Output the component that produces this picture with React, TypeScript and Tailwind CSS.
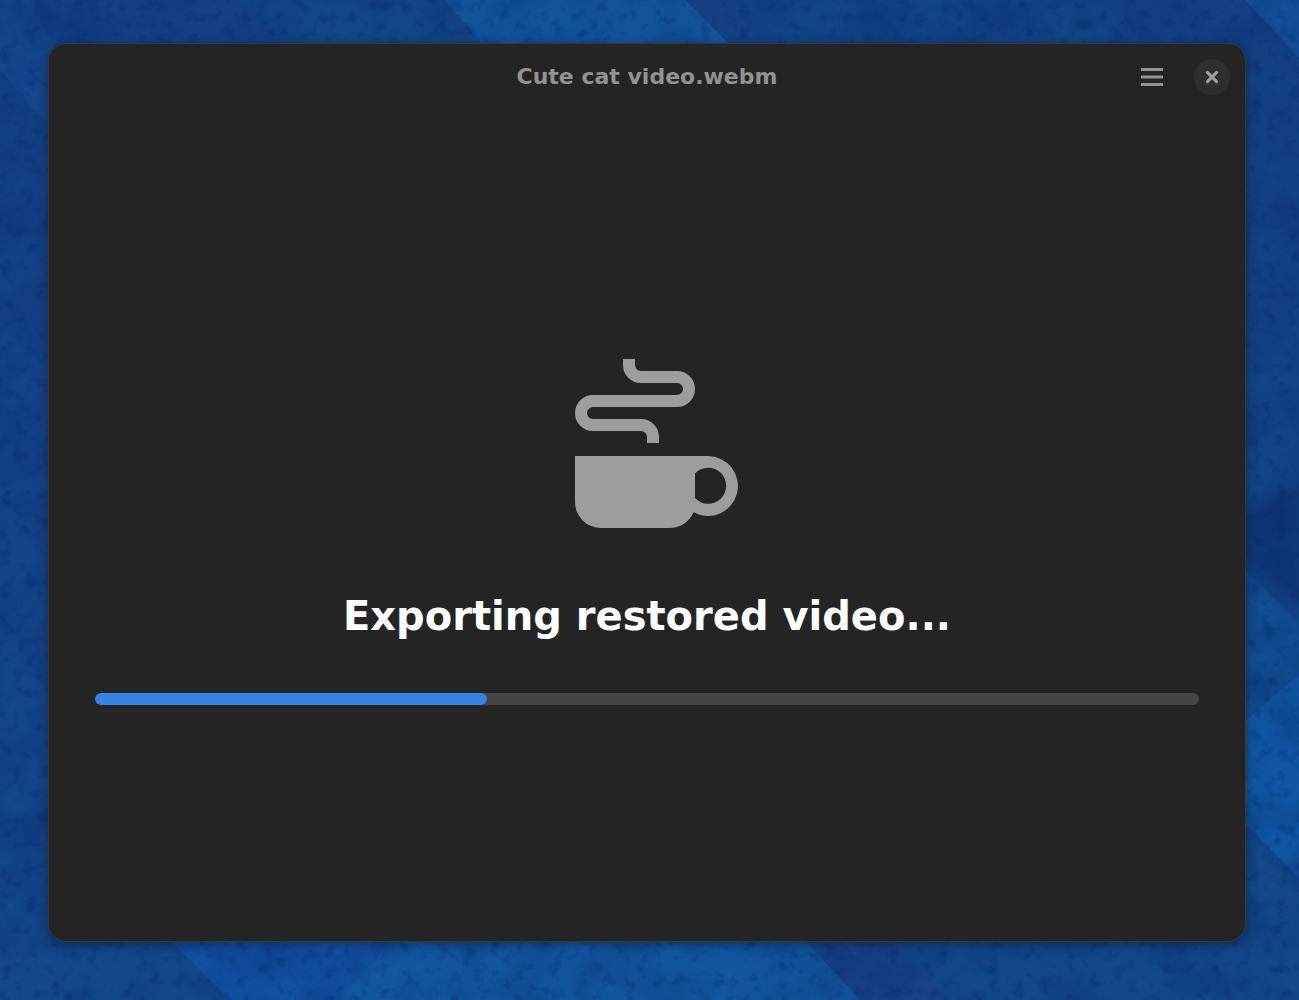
function Wallpaper() {
  return (
    <svg
      aria-hidden="true"
      className="absolute inset-0 -z-10 h-full w-full"
      viewBox="0 0 1299 1000"
      preserveAspectRatio="none"
    >
      <defs>
        <filter id="mottle" x="0" y="0" width="100%" height="100%" colorInterpolationFilters="sRGB">
          <feTurbulence type="fractalNoise" baseFrequency="0.02" numOctaves="3" seed="8" />
          <feColorMatrix values="0 0 0 0 0.03  0 0 0 0 0.17  0 0 0 0 0.43  2.4 0 0 0 -0.95" />
        </filter>
        <filter id="speckle" x="0" y="0" width="100%" height="100%" colorInterpolationFilters="sRGB">
          <feTurbulence type="fractalNoise" baseFrequency="0.08" numOctaves="4" seed="21" />
          <feColorMatrix values="0 0 0 0 0.02  0 0 0 0 0.14  0 0 0 0 0.42  3.4 0 0 0 -1.8" />
        </filter>
        <linearGradient id="base" x1="0" y1="0" x2="0" y2="1">
          <stop offset="0" stopColor="#134182" />
          <stop offset="1" stopColor="#12488a" />
        </linearGradient>
      </defs>
      <rect width="1299" height="1000" fill="url(#base)" />
      <path d="M0 0H30L60 60V140L0 70Z" fill="#15478c" />
      <path d="M240 0H445L490 50H290Z" fill="#124684" />
      <path d="M445 0H685L735 50H487Z" fill="#12549a" />
      <path d="M740 0H1100L1150 50H790Z" fill="#124584" />
      <path d="M1245 0H1299V58Z" fill="#15509b" />
      <path d="M1240 565L1299 622V690L1240 720Z" fill="#124c91" />
      <path d="M1240 725L1299 675V878L1240 818Z" fill="#1156a2" />
      <path d="M160 930H795L860 1000H230Z" fill="#1250a0" />
      <path d="M400 930H795L860 1000H340Z" fill="#12569f" />
      <path d="M800 930H880L950 1000H860Z" fill="#174388" />
      <rect width="1299" height="1000" filter="url(#mottle)" opacity="0.35" />
      <rect width="1299" height="1000" filter="url(#speckle)" opacity="0.3" />
      <g filter="blur(6px)" fill="#0a2260">
        <path d="M1240 515L1310 480V615L1240 560Z" opacity="0.4" />
      </g>
      <ellipse cx="1083" cy="24" rx="10" ry="4" fill="#0a2260" filter="blur(3px)" opacity="0.6" />
    </svg>
  );
}

function MenuIcon() {
  return (
    <svg aria-hidden="true" className="h-6 w-6" viewBox="0 0 24 24" fill="none" stroke="#929292" strokeWidth="3">
      <path d="M1 4.5h22M1 12h22M1 19.5h22" />
    </svg>
  );
}

function CloseIcon() {
  return (
    <svg aria-hidden="true" className="h-6 w-6" viewBox="0 0 24 24" fill="none" stroke="#a0a0a0" strokeWidth="3" strokeLinecap="round">
      <path d="M7.4 7.4l9.2 9.2M16.6 7.4l-9.2 9.2" />
    </svg>
  );
}

function CoffeeIcon() {
  return (
    <svg aria-hidden="true" className="h-48 w-48" viewBox="0 0 192 192">
      <path
        d="M78 12v6a12 12 0 0 0 12 12h36a12 12 0 0 1 0 24H42a12 12 0 0 0 0 24h48a12 12 0 0 1 12 12v6"
        fill="none"
        stroke="#9d9d9d"
        strokeWidth="12"
      />
      <path
        fill="#9d9d9d"
        fillRule="evenodd"
        d="M24 109H156.500a30 30 0 1 1-14 56.300A26 26 0 0 1 118 181H50a26 26 0 0 1-26-26ZM144 126.500V151a18 18 0 1 0 0-24.500Z"
      />
    </svg>
  );
}

export default function App() {
  const progress = 35.5;
  return (
    <div className="relative isolate flex min-h-screen flex-col overflow-hidden bg-[#124486] pt-[43px] pr-[53px] pb-[58px] pl-12 font-['DejaVu_Sans',sans-serif]">
      <Wallpaper />
      <main className="flex flex-1 flex-col rounded-[18px] border border-[#3a3836] bg-[#242424] shadow-[0_3px_12px_rgba(0,0,0,0.35)]">
        <header className="grid grid-cols-[1fr_auto_1fr] items-center px-[15px] pt-[15px]">
          <h1 className="col-start-2 text-[22px] leading-9 font-bold text-[#929292]">Cute cat video.webm</h1>
          <div className="flex items-center justify-end gap-6">
            <button type="button" aria-label="Main menu" className="flex h-9 w-9 items-center justify-center rounded-lg">
              <MenuIcon />
            </button>
            <button type="button" aria-label="Close" className="flex h-9 w-9 items-center justify-center rounded-full bg-[#2e2e2e]">
              <CloseIcon />
            </button>
          </div>
        </header>
        <section className="flex flex-1 flex-col items-center justify-center px-[46px] pt-4">
          <CoffeeIcon />
          <h2 id="status" className="mt-12 text-center text-[40px] leading-[58px] font-bold text-white">
            Exporting restored video...
          </h2>
          <div
            role="progressbar"
            aria-labelledby="status"
            aria-valuemin={0}
            aria-valuemax={100}
            aria-valuenow={progress}
            className="mt-12 h-3 w-full overflow-hidden rounded-full bg-[#454545]"
          >
            <div className="h-full rounded-full bg-[#3584e4]" style={{ width: `${progress}%` }} />
          </div>
        </section>
      </main>
    </div>
  );
}
